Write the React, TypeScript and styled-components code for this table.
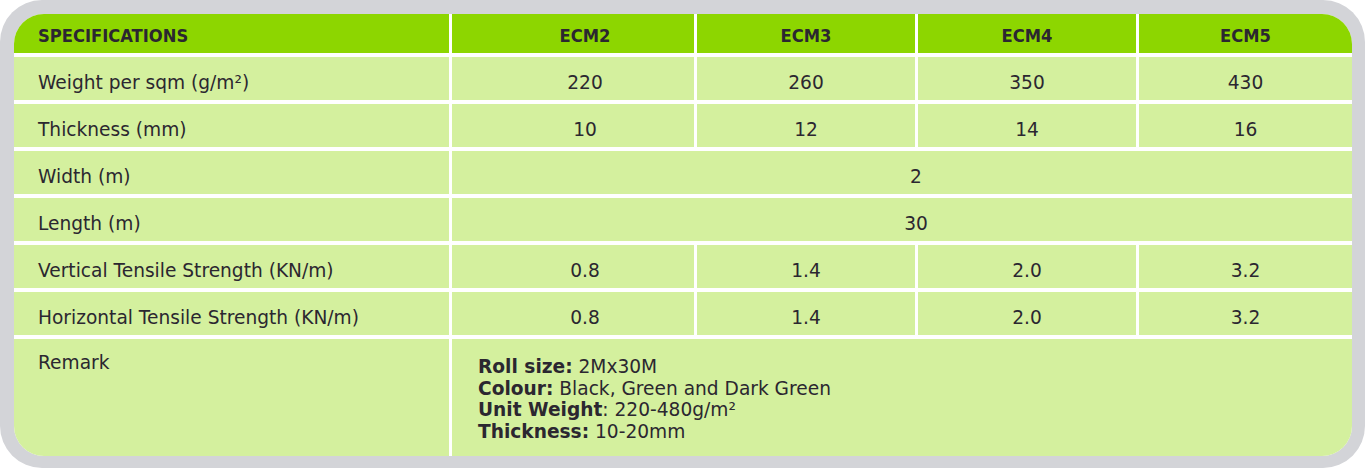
import React from "react";
import styled, { createGlobalStyle } from "styled-components";

const Global = createGlobalStyle`
  html, body { margin: 0; padding: 0; background: #ffffff; }
  body { font-family: "DejaVu Sans", "Liberation Sans", sans-serif; }
`;

const Frame = styled.div`
  box-sizing: border-box;
  width: 1365px;
  height: 468px;
  padding: 14px 13px 12px 14px;
  background: #d3d4d8;
  border-radius: 42px;
`;

const Table = styled.div`
  display: grid;
  grid-template-columns: 435px 242px 218px 218px 213px;
  grid-template-rows: 39px repeat(6, 43px) 117px;
  gap: 4px 3px;
  height: 442px;
  background: #ffffff;
  border-radius: 30px;
  overflow: hidden;
`;

const Cell = styled.div<{ $head?: boolean; $first?: boolean; $span?: number; $pl?: number }>`
  box-sizing: border-box;
  display: flex;
  align-items: center;
  justify-content: ${(p) => (p.$first ? "flex-start" : "center")};
  grid-column: ${(p) => (p.$span ? `span ${p.$span}` : "auto")};
  padding: ${(p) => (p.$head ? "4px" : "8px")} 0 0 ${(p) => p.$pl ?? 0}px;
  background: ${(p) => (p.$head ? "#8dd600" : "#d4f09e")};
  color: #2b2730;
  font-size: ${(p) => (p.$head ? "18.2px" : "18.6px")};
  font-weight: ${(p) => (p.$head ? 700 : 400)};
  font-family: ${(p) =>
    p.$head ? `"DejaVu Sans Condensed", "DejaVu Sans", sans-serif` : `"DejaVu Sans", sans-serif`};
  white-space: nowrap;
`;

const RemarkLabel = styled.div`
  box-sizing: border-box;
  padding: 13px 0 0 24px;
  background: #d4f09e;
  color: #2b2730;
  font-size: 18.6px;
  line-height: 21.7px;
`;

const RemarkBody = styled.div`
  box-sizing: border-box;
  grid-column: span 4;
  padding: 17px 0 0 26px;
  background: #d4f09e;
  color: #2b2730;
  font-size: 18.6px;
  line-height: 21.7px;
`;

const Line = styled.div`
  white-space: nowrap;
`;

const Key = styled.b`
  font-weight: 700;
`;

const models = ["ECM2", "ECM3", "ECM4", "ECM5"];

type Row = { label: string; values?: string[]; all?: string };

const rows: Row[] = [
  { label: "Weight per sqm (g/m²)", values: ["220", "260", "350", "430"] },
  { label: "Thickness (mm)", values: ["10", "12", "14", "16"] },
  { label: "Width (m)", all: "2" },
  { label: "Length (m)", all: "30" },
  { label: "Vertical Tensile Strength (KN/m)", values: ["0.8", "1.4", "2.0", "3.2"] },
  { label: "Horizontal Tensile Strength (KN/m)", values: ["0.8", "1.4", "2.0", "3.2"] },
];

export default function App() {
  return (
    <>
      <Global />
      <Frame>
        <Table>
          <Cell $head $first $pl={24}>SPECIFICATIONS</Cell>
          {models.map((m, i) => (
            <Cell key={m} $head $pl={i === 0 ? 24 : 0}>
              {m}
            </Cell>
          ))}
          {rows.map((r) => (
            <React.Fragment key={r.label}>
              <Cell $first $pl={24}>{r.label}</Cell>
              {r.all ? (
                <Cell $span={4} $pl={28}>{r.all}</Cell>
              ) : (
                r.values!.map((v, i) => (
                  <Cell key={i} $pl={i === 0 ? 24 : 0}>
                    {v}
                  </Cell>
                ))
              )}
            </React.Fragment>
          ))}
          <RemarkLabel>Remark</RemarkLabel>
          <RemarkBody>
            <Line><Key>Roll size:</Key> 2Mx30M</Line>
            <Line><Key>Colour:</Key> Black, Green and Dark Green</Line>
            <Line><Key>Unit Weight</Key>: 220-480g/m²</Line>
            <Line><Key>Thickness:</Key> 10-20mm</Line>
          </RemarkBody>
        </Table>
      </Frame>
    </>
  );
}
